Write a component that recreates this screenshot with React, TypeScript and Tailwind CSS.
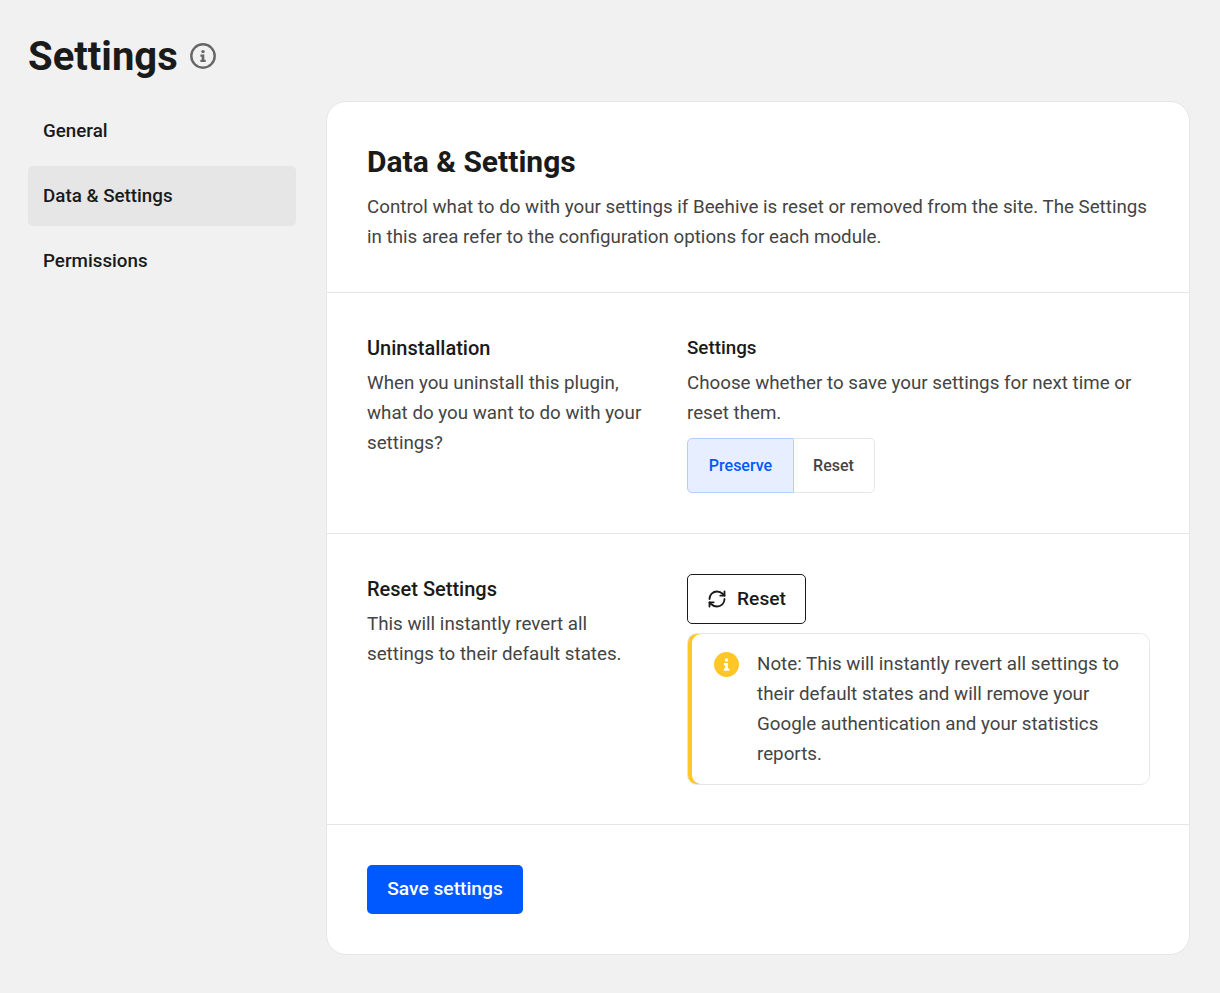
import { RefreshCw } from "lucide-react";

const InfoGlyph = ({ fill }: { fill: string }) => (
  <>
    <circle cx="12" cy="7.6" r="1.7" fill={fill} />
    <path d="M9.4 10.6h3.9v5.2h1.4v2.1H9.4v-2.1h1.3v-3.1H9.4z" fill={fill} />
  </>
);

const navItems = ["General", "Data & Settings", "Permissions"];

const App = () => {
  return (
    <div className="min-h-[993px] bg-[#f1f1f1] pl-[28px] pr-[30px] pt-[31px] font-['Roboto',sans-serif] text-[#1a1a1a]">
      {/* Page title */}
      <div className="flex h-[50px] items-center">
        <h1 className="pt-[1px] text-[40px] leading-[50px] font-bold">Settings</h1>
        <svg className="ml-[12px] h-[26px] w-[26px]" viewBox="0 0 26 26" fill="none">
          <circle cx="13" cy="13" r="11.7" stroke="#666666" strokeWidth="2.4" />
          <g transform="translate(1 1)">
            <InfoGlyph fill="#666666" />
          </g>
        </svg>
      </div>

      <div className="mt-[20px] flex gap-[30px]">
        {/* Sidebar */}
        <nav className="flex w-[268px] shrink-0 flex-col gap-[5px]">
          {navItems.map((item) => (
            <div
              key={item}
              className={`flex h-[60px] items-center rounded-[5px] px-[15px] text-[18.8px] font-medium ${
                item === "Data & Settings" ? "bg-[#e6e6e6]" : ""
              }`}
            >
              {item}
            </div>
          ))}
        </nav>

        {/* Main card */}
        <main className="h-[854px] min-w-0 flex-1 rounded-[20px] border border-[#e6e6e6] bg-white">
          <section className="border-b border-[#e6e6e6] p-[40px]">
            <h2 className="text-[30px] leading-[40px] font-bold">Data &amp; Settings</h2>
            <p className="mt-[10px] text-[18.75px] leading-[30px] text-[#444444]">
              Control what to do with your settings if Beehive is reset or removed from the site. The Settings in this area refer to the configuration options for each module.
            </p>
          </section>

          <section className="flex gap-[40px] border-b border-[#e6e6e6] p-[40px]">
            <div className="w-[280px] shrink-0">
              <h3 className="text-[20px] leading-[30px] font-medium">Uninstallation</h3>
              <p className="mt-[5px] text-[18.75px] leading-[30px] text-[#444444]">
                When you uninstall this plugin, what do you want to do with your settings?
              </p>
            </div>
            <div className="min-w-0 flex-1">
              <h3 className="text-[18.8px] leading-[30px] font-medium">Settings</h3>
              <p className="mt-[5px] text-[18.75px] leading-[30px] text-[#444444]">
                Choose whether to save your settings for next time or reset them.
              </p>
              <div className="mt-[10px] flex h-[55px] w-[188px] text-[16px] font-medium">
                <div className="flex w-[107px] items-center justify-center rounded-l-[5px] border border-[#b3cfff] bg-[#e6eeff] text-[#0059ff]">
                  Preserve
                </div>
                <div className="flex flex-1 items-center justify-center rounded-r-[5px] border border-l-0 border-[#e6e6e6] pr-[1px] text-[#444444]">
                  Reset
                </div>
              </div>
            </div>
          </section>

          <section className="flex gap-[40px] border-b border-[#e6e6e6] px-[40px] pt-[40px] pb-[39px]">
            <div className="w-[280px] shrink-0">
              <h3 className="text-[20px] leading-[30px] font-medium">Reset Settings</h3>
              <p className="mt-[5px] text-[18.75px] leading-[30px] text-[#444444]">
                This will instantly revert all settings to their default states.
              </p>
            </div>
            <div className="min-w-0 flex-1">
              <button className="flex h-[50px] w-[119px] items-center justify-center gap-[10px] rounded-[5px] border border-[#1a1a1a] text-[19.2px] font-medium">
                <RefreshCw className="h-[20px] w-[20px]" strokeWidth={2.2} />
                Reset
              </button>
              <div className="mt-[9px] w-[463px] overflow-hidden rounded-[10px] border border-[#e6e6e6] bg-[linear-gradient(90deg,#ffc726_50%,#ffffff_50%)] pl-[4px]">
                <div className="flex rounded-l-[9px] bg-white py-[15px] pr-[20px] pl-[22px]">
                  <svg className="mt-[3px] h-[25px] w-[25px] shrink-0" viewBox="0 0 24 24">
                    <circle cx="12" cy="12" r="12" fill="#ffc726" />
                    <InfoGlyph fill="#ffffff" />
                  </svg>
                  <p className="ml-[18px] text-[18.75px] leading-[30px] text-[#444444]">
                    Note: This will instantly revert all settings to their default states and will remove your Google authentication and your statistics reports.
                  </p>
                </div>
              </div>
            </div>
          </section>

          <section className="p-[40px]">
            <button className="h-[49px] w-[156px] rounded-[5px] bg-[#0059ff] text-[19.2px] font-medium text-white">
              Save settings
            </button>
          </section>
        </main>
      </div>
    </div>
  );
};

export default App;
